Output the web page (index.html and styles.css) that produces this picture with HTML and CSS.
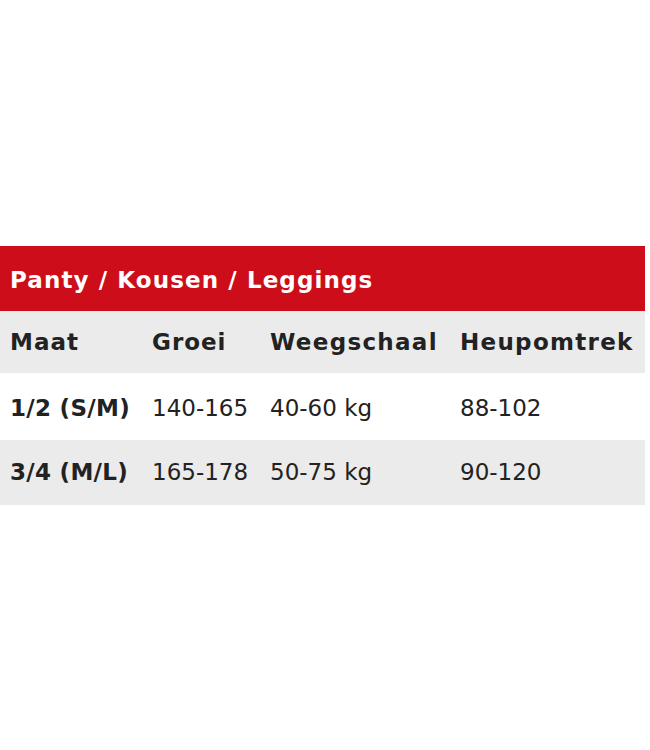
FILE: index.html
```html
<!DOCTYPE html>
<html lang="nl">
<head>
<meta charset="utf-8">
<title>Maattabel</title>
<link rel="stylesheet" href="styles.css">
</head>
<body>
<div class="page">
  <table class="sizes">
    <colgroup>
      <col class="c1"><col class="c2"><col class="c3"><col class="c4">
    </colgroup>
    <thead>
      <tr class="title-row"><th colspan="4">Panty / Kousen / Leggings</th></tr>
      <tr class="head-row"><th>Maat</th><th>Groei</th><th class="wide">Weegschaal</th><th class="wide">Heupomtrek</th></tr>
    </thead>
    <tbody>
      <tr class="r1"><th>1/2 (S/M)</th><td>140-165</td><td>40-60 kg</td><td>88-102</td></tr>
      <tr class="r2"><th>3/4 (M/L)</th><td>165-178</td><td>50-75 kg</td><td>90-120</td></tr>
    </tbody>
  </table>
</div>
</body>
</html>
```
FILE: styles.css
```css
html, body {
  margin: 0;
  padding: 0;
  background: #ffffff;
}
.page {
  padding-top: 246px;
}
.sizes {
  border-collapse: collapse;
  table-layout: fixed;
  width: 645px;
  font-family: "DejaVu Sans", sans-serif;
  font-size: 23px;
  color: #222222;
}
.c1 { width: 142px; }
.c2 { width: 118px; }
.c3 { width: 190px; }
.c4 { width: 195px; }
.sizes th, .sizes td {
  padding: 0 0 0 10px;
  text-align: left;
  vertical-align: middle;
  white-space: nowrap;
  line-height: 27px;
}
.sizes th {
  font-weight: bold;
  letter-spacing: 1px;
}
.sizes td {
  font-weight: normal;
}
.title-row th {
  background: #cd0e1a;
  color: #ffffff;
  height: 61px;
  padding-top: 4px;
  letter-spacing: 1.1px;
}
.head-row th {
  background: #ebebeb;
  height: 62px;
}
.head-row th.wide {
  letter-spacing: 1.3px;
}
.sizes tbody th {
  letter-spacing: 0.3px;
}
.r1 th, .r1 td {
  background: #ffffff;
  height: 64px;
  padding-top: 3px;
}
.r2 th, .r2 td {
  background: #ebebeb;
  height: 65px;
}
```
